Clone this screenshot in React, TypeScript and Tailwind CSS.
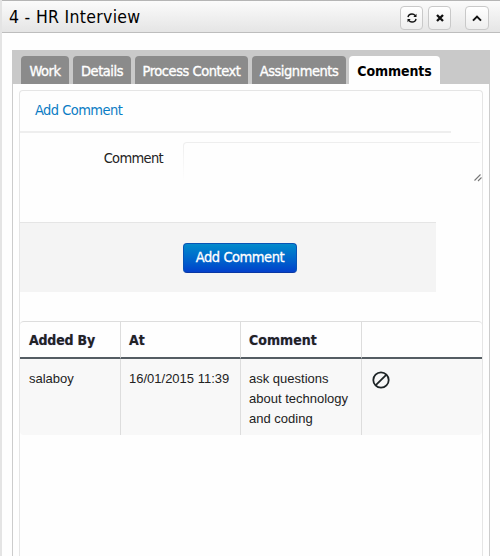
import type { ReactNode } from "react";

const tahoma = "font-['DejaVu_Sans_Condensed','DejaVu_Sans',sans-serif] [font-stretch:condensed]";

function IconButton({ children, label, className = "" }: { children: ReactNode; label: string; className?: string }) {
  return (
    <button
      aria-label={label}
      className={`flex h-6 items-center justify-center rounded-[4px] border border-[#c9c9c9] bg-gradient-to-b from-white to-[#eeeeee] ${className}`}
    >
      {children}
    </button>
  );
}

const tabs = [
  { label: "Work", box: "w-12 mr-1" },
  { label: "Details", box: "w-[58px] mr-1" },
  { label: "Process Context", box: "w-[113px] mr-1" },
  { label: "Assignments", box: "w-[94px] mr-[3px]" },
];

export default function App() {
  return (
    <div className={`flex h-[556px] w-[500px] flex-col overflow-hidden border-l-2 border-[#e4e4e4] bg-[#fefefe] text-[#222] ${tahoma}`}>
      <header className="flex h-[33px] shrink-0 items-center border-y border-t-[#b5b5b5] border-b-[#bdbdbd] bg-gradient-to-b from-[#fbfbfb] to-[#e5e5e5] pl-[7px] pr-[11px]">
        <h1 className="grow whitespace-nowrap pt-[2px] text-[17.5px] tracking-[0.3px] text-black">4 - HR Interview</h1>
        <div className="flex pt-[3px]">
          <IconButton label="Refresh" className="mr-[5px] w-[23px]">
            <svg width="10" height="10" viewBox="0 0 10 10" fill="none" stroke="#111" strokeWidth="1.4">
              <path d="M1 4.2C1.3 2.2 3 1 5 1c1.4 0 2.5.6 3.2 1.6M9 5.8C8.700 7.800 7 9 5 9 3.600 9 2.500 8.400 1.800 7.400" />
              <path d="M9.500.8V4H6.300zM.5 9.200V6h3.200z" fill="#111" stroke="none" />
            </svg>
          </IconButton>
          <IconButton label="Close" className="mr-[14px] w-[23px]">
            <svg width="8" height="8" viewBox="0 0 8 8" stroke="#111" strokeWidth="2.3">
              <path d="M1 1l6 6M7 1L1 7" />
            </svg>
          </IconButton>
          <IconButton label="Collapse" className="w-6">
            <svg width="10" height="7" viewBox="0 0 10 7" fill="none" stroke="#111" strokeWidth="2">
              <path d="M1 5.600L5 1.600l4 4" />
            </svg>
          </IconButton>
        </div>
      </header>

      <main className="ml-[10px] mt-[17px] flex w-[478px] grow flex-col">
        <nav className="flex h-[34px] shrink-0 items-end bg-[#c9c9c9] pl-[9px]">
          {tabs.map((t) => (
            <div
              key={t.label}
              className={`flex h-7 items-center justify-center whitespace-nowrap rounded-t-[4px] bg-[#8b8b8b] pt-[3px] text-[14.5px] tracking-[-0.45px] text-white [-webkit-text-stroke:0.35px_white] ${t.box}`}
            >
              {t.label}
            </div>
          ))}
          <div className="flex h-7 w-[91px] items-center justify-center rounded-t-[4px] bg-[#fefefe] pt-[3px] text-[14px] font-bold tracking-[-0.1px] text-black">
            Comments
          </div>
        </nav>

        <div className="flex grow flex-col border-x border-[#ccc] px-[6px] pt-[6px]">
          <section className="flex grow flex-col rounded-t-[4px] border border-b-0 border-[#e5e5e5]">
            <div className="h-[42px] w-[431px] shrink-0 border-b-2 border-[#eee] pl-[15px] pt-[9px] text-[14.5px] leading-[20px] tracking-[-0.55px] text-[#0a7cc4]">
              Add Comment
            </div>
            <div className="flex h-[89px] shrink-0 pt-[9px]">
              <label className="w-[143px] pt-[6px] text-right text-[14.5px] leading-[20px] tracking-[-0.65px]">Comment</label>
              <div className="ml-5 flex h-10 grow items-end justify-end rounded-t-[4px] border-t border-[#eee] bg-[linear-gradient(to_bottom,#eee,#fefefe)] pl-px">
                <div className="flex h-full w-full items-end justify-end rounded-tl-[3px] bg-[#fefefe]">
                  <svg width="8" height="8" viewBox="0 0 8 8" stroke="#777" strokeWidth="1.1">
                    <path d="M.5 6.500l6-6M4 7l3.500-3.500" />
                  </svg>
                </div>
              </div>
            </div>
            <div className="flex h-[70px] w-[416px] shrink-0 items-center border-t border-[#e5e5e5] bg-[#f4f4f4] pl-[163px]">
              <button className="flex h-[30px] w-[114px] items-center justify-center whitespace-nowrap rounded-[4px] border border-[#0754b5] border-b-[#0837a4] bg-gradient-to-b from-[#078acb] to-[#0640cb] text-[14.5px] tracking-[-0.45px] text-white [-webkit-text-stroke:0.3px_white]">
                Add Comment
              </button>
            </div>
            <div className="mt-[29px] grid h-[114px] grid-cols-[101px_120px_121px_1fr] grid-rows-[37px_1fr] overflow-hidden rounded-[4px] border-t border-[#ddd]">
              {["Added By", "At", "Comment", ""].map((h, i) => (
                <div
                  key={i}
                  className="border-b-2 border-r border-b-[#555d63] border-r-[#ddd] pl-2 pt-[7px] text-[14px] font-bold leading-[22px] tracking-[0px] [text-shadow:0_0_1px_#9c9ce8] first:pl-[9px] first:tracking-[-0.2px] [&:nth-child(4)]:border-r-0"
                >
                  {h}
                </div>
              ))}
              {["salaboy", "16/01/2015 11:39", "ask questions about technology and coding"].map((c) => (
                <div
                  key={c}
                  className="border-r border-[#ddd] bg-[#f8f8f8] pl-2 pt-[10px] font-['Liberation_Sans',sans-serif] text-[13px] leading-[20px] [font-stretch:normal] [&:nth-child(5)]:pl-[9px] [&:nth-child(7)]:pr-2"
                >
                  {c}
                </div>
              ))}
              <div className="bg-[#f8f8f8] pl-[10px] pt-[12px]">
                <svg width="18" height="18" viewBox="0 0 18 18" fill="none" stroke="#1d2426" strokeWidth="1.800">
                  <circle cx="9" cy="9" r="7.700" />
                  <path d="M3.800 14.200L14.200 3.800" />
                </svg>
              </div>
            </div>
          </section>
        </div>
      </main>
    </div>
  );
}
